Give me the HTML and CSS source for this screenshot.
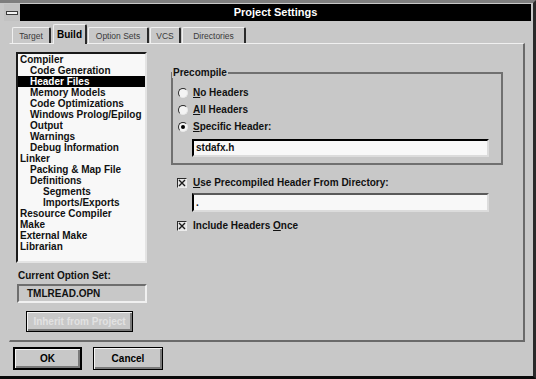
FILE: index.html
```html
<!DOCTYPE html>
<html>
<head>
<meta charset="utf-8">
<title>Project Settings</title>
<link rel="stylesheet" href="styles.css">
</head>
<body>
<div class="window">
  <div class="titlebar">
    <div class="sysmenu"><span class="dash"></span></div>
    <div class="caption">Project Settings</div>
  </div>
  <div class="tabs">
    <div class="tab t-target">Target</div>
    <div class="tab active t-build">Build</div>
    <div class="tab t-opt">Option Sets</div>
    <div class="tab t-vcs">VCS</div>
    <div class="tab t-dir">Directories</div>
  </div>
  <div class="panel">
    <div class="leftcol">
      <ul class="listbox">
        <li>Compiler</li>
        <li class="l1">Code Generation</li>
        <li class="l1 sel">Header Files</li>
        <li class="l1">Memory Models</li>
        <li class="l1">Code Optimizations</li>
        <li class="l1">Windows Prolog/Epilog</li>
        <li class="l1">Output</li>
        <li class="l1">Warnings</li>
        <li class="l1">Debug Information</li>
        <li>Linker</li>
        <li class="l1">Packing &amp; Map File</li>
        <li class="l1">Definitions</li>
        <li class="l2">Segments</li>
        <li class="l2">Imports/Exports</li>
        <li>Resource Compiler</li>
        <li>Make</li>
        <li>External Make</li>
        <li>Librarian</li>
      </ul>
      <div class="label">Current Option Set:</div>
      <div class="optset">TMLREAD.OPN</div>
      <button class="btn inherit" disabled>Inherit from Project</button>
    </div>
    <div class="rightcol">
      <fieldset class="group">
        <legend>Precompile</legend>
        <div class="opt"><span class="radio"></span><span><u>N</u>o Headers</span></div>
        <div class="opt"><span class="radio"></span><span><u>A</u>ll Headers</span></div>
        <div class="opt"><span class="radio on"></span><span><u>S</u>pecific Header:</span></div>
        <div class="field">stdafx.h</div>
      </fieldset>
      <div class="opt checkrow"><span class="check"><svg width="8" height="8" viewBox="0 0 8 8"><path d="M1 1L7 7M7 1L1 7" stroke="#1a1a1a" stroke-width="1.4"/></svg></span><span><u>U</u>se Precompiled Header From Directory:</span></div>
      <div class="field field2">.</div>
      <div class="opt checkrow2"><span class="check"><svg width="8" height="8" viewBox="0 0 8 8"><path d="M1 1L7 7M7 1L1 7" stroke="#1a1a1a" stroke-width="1.4"/></svg></span><span>Include Headers <u>O</u>nce</span></div>
    </div>
  </div>
  <div class="buttons">
    <button class="btn ok">OK</button>
    <button class="btn cancel">Cancel</button>
  </div>
</div>
</body>
</html>
```

FILE: styles.css
```css
body {
  margin: 0;
  background: #c8c8c8;
}

.window {
  box-sizing: border-box;
  width: 536px;
  height: 379px;
  background: #c8c8c8;
  border-top: 3px solid #7e7e7e;
  border-right: 3px solid #2a2a2a;
  border-bottom: 3px solid #0a0a0a;
  padding: 1px 2px 6px 4px;
  font-family: "Liberation Sans", Arial, sans-serif;
  font-size: 10px;
  font-weight: bold;
  color: #111;
  display: flex;
  flex-direction: column;
}

.titlebar {
  display: flex;
  height: 17px;
  flex: none;
}

.sysmenu {
  width: 16px;
  background: #c2c2c2;
  display: flex;
  align-items: center;
  justify-content: center;
}

.dash {
  width: 10px;
  height: 2px;
  background: #f2f2f2;
  border: 1px solid #3a3a3a;
}

.caption {
  flex: 1;
  background: #000;
  color: #fff;
  font-size: 11px;
  line-height: 17px;
  text-align: center;
}

.tabs {
  display: flex;
  align-items: flex-end;
  height: 19px;
  margin: 3px 0 0 8px;
  position: relative;
  z-index: 1;
  flex: none;
}

.tab {
  box-sizing: border-box;
  height: 16px;
  border-top: 1px solid #f0f0f0;
  border-left: 1px solid #f0f0f0;
  border-right: 2px solid #2a2a2a;
  border-radius: 2px 2px 0 0;
  font-size: 8.5px;
  font-weight: normal;
  color: #3a3a3a;
  display: flex;
  align-items: center;
  justify-content: center;
  background: #c8c8c8;
}

.tab.active {
  height: 20px;
  margin-bottom: -1px;
  font-size: 10px;
  font-weight: bold;
  color: #000;
}

.t-target { width: 39px; margin-right: 2px; }
.t-build { width: 34px; margin-right: 1px; }
.t-opt { width: 61px; margin-right: 1px; }
.t-vcs { width: 31px; margin-right: 1px; }
.t-dir { width: 64px; }

.panel {
  box-sizing: border-box;
  width: 516px;
  height: 299px;
  margin-left: 5px;
  flex: none;
  border-top: 1px solid #f0f0f0;
  border-left: 1px solid transparent;
  border-right: 2px solid #6a6a6a;
  border-bottom: 2px solid #6a6a6a;
  padding: 8px 0 0 6px;
  display: flex;
}

.leftcol {
  width: 131px;
  display: flex;
  flex-direction: column;
  align-items: flex-start;
}

.listbox {
  box-sizing: border-box;
  width: 131px;
  height: 211px;
  margin: 0;
  padding: 0;
  list-style: none;
  background: #f8f8f8;
  border: 2px solid;
  border-color: #1a1a1a #e4e4e4 #e4e4e4 #1a1a1a;
}

.listbox li {
  height: 11px;
  line-height: 11px;
  white-space: nowrap;
  padding-left: 2px;
}

.listbox .l1 { padding-left: 12px; }
.listbox .l2 { padding-left: 25px; }

.listbox .sel {
  background: #000;
  color: #fff;
}

.label {
  margin: 7px 0 0 2px;
  line-height: 11px;
}

.optset {
  box-sizing: border-box;
  width: 130px;
  height: 19px;
  margin: 3px 0 0 1px;
  border: 2px solid;
  border-color: #6e6e6e #f0f0f0 #f0f0f0 #6e6e6e;
  padding-left: 8px;
  line-height: 15px;
}

.btn {
  font-family: "Liberation Sans", Arial, sans-serif;
  font-size: 10px;
  font-weight: bold;
  background: #c8c8c8;
  border: 1px solid #000;
  box-shadow: inset 1px 1px 0 #f4f4f4, inset -2px -2px 0 #7a7a7a;
  padding: 0;
  color: #000;
  box-sizing: border-box;
}

.inherit {
  width: 107px;
  height: 21px;
  margin: 8px 0 0 10px;
  color: #e2e2e2;
}

.rightcol {
  margin-left: 24px;
  padding-top: 15px;
  display: flex;
  flex-direction: column;
  align-items: flex-start;
}

.group {
  box-sizing: border-box;
  width: 332px;
  margin: 0;
  padding: 6px 0 6px 5px;
  border: 2px solid #707070;
  min-inline-size: 0;
}

.group legend {
  padding: 0 1px;
  margin-left: -6px;
  line-height: 11px;
}

.opt {
  display: flex;
  align-items: center;
  height: 17px;
  line-height: 17px;
  white-space: nowrap;
}

.radio {
  box-sizing: border-box;
  width: 10px;
  height: 10px;
  border-radius: 50%;
  border: 1px solid;
  border-color: #2a2a2a #e8e8e8 #e8e8e8 #2a2a2a;
  background: #f4f4f4;
  margin-right: 5px;
  position: relative;
}

.radio.on::after {
  content: "";
  position: absolute;
  left: 2px;
  top: 2px;
  width: 4px;
  height: 4px;
  border-radius: 50%;
  background: #000;
}

.field {
  box-sizing: border-box;
  width: 297px;
  height: 18px;
  margin: 4px 0 0 14px;
  border: 2px solid;
  border-color: #000 #dcdcdc #dcdcdc #000;
  background: #f8f8f8;
  padding-left: 2px;
  line-height: 14px;
}

.checkrow {
  margin: 9px 0 0 6px;
}

.checkrow2 {
  margin: 5px 0 0 6px;
}

.check {
  box-sizing: border-box;
  width: 10px;
  height: 10px;
  border: 1px solid;
  border-color: #2a2a2a #ececec #ececec #2a2a2a;
  background: #e6e6e6;
  margin-right: 6px;
  display: flex;
  align-items: center;
  justify-content: center;
}

.check svg {
  display: block;
}

.field2 {
  height: 19px;
  margin: 2px 0 0 21px;
  border-color: #5a5a5a #dcdcdc #dcdcdc #000;
  line-height: 15px;
}

.buttons {
  display: flex;
  margin-top: 5px;
  flex: none;
}

.ok {
  width: 69px;
  height: 23px;
  margin-left: 9px;
  border: 2px solid #000;
}

.cancel {
  width: 70px;
  height: 23px;
  margin-left: 11px;
}
```
